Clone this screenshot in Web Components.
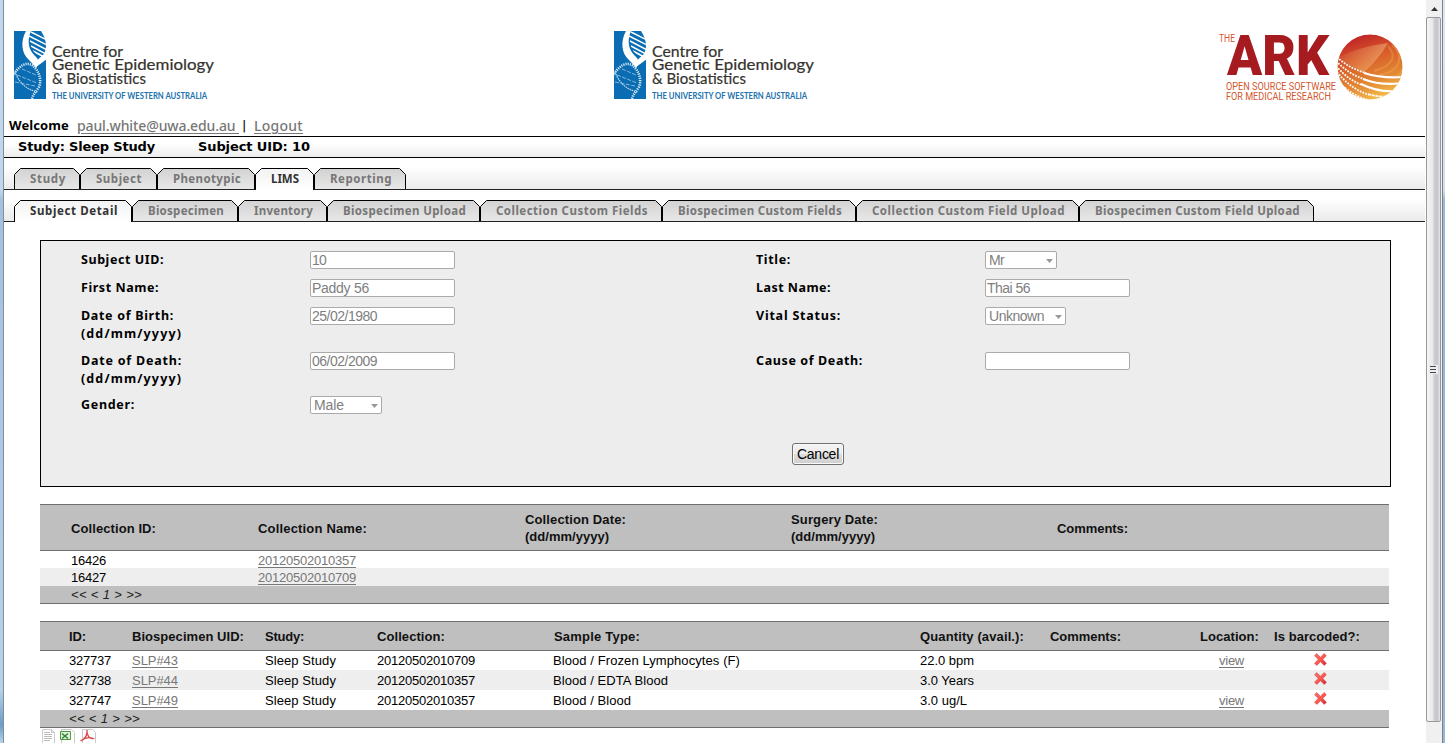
<!DOCTYPE html>
<html lang="en">
<head>
<meta charset="utf-8">
<title>The Ark - LIMS</title>
<style>
html,body{margin:0;height:743px;overflow:hidden;background:#fff}
body{font:13px/17px "Liberation Sans",Arial,sans-serif;color:#000}
</style>
</head>
<body>
<ark-app></ark-app>
<script>
const define = (name, html, setup) => customElements.define(name, class extends HTMLElement {
  connectedCallback() {
    if (this.shadowRoot) return;
    const root = this.attachShadow({mode: 'open'});
    root.innerHTML = typeof html === 'function' ? html(this) : html;
    if (setup) setup(this, root);
  }
});

/* One line of text whose tracking is adjusted so that it fills the width in "w". */
define('ark-text', `<style>
:host{display:inline-block;white-space:nowrap;vertical-align:top}
span{display:inline-block}
:host([link]) span{color:#777;text-decoration:underline;text-underline-offset:2px;text-decoration-thickness:1px}
</style><span><slot></slot></span>`, (host, root) => {
  const w = +host.getAttribute('w');
  if (!w) return;
  const span = root.querySelector('span');
  const n = host.textContent.length;
  span.style.letterSpacing = (w - span.getBoundingClientRect().width) / n + 'px';
  host.style.width = w + 'px';
});

define('uwa-logo', `<style>:host{display:block;width:210px;height:72px}svg{display:block;overflow:visible}</style>
<svg width="210" height="72" viewBox="0 0 210 72">
<defs><clipPath id="box"><path d="M0 1h32v68H0z"/></clipPath><clipPath id="helix"><path d="M15 1C14 12 17 20 23 25L33 32V1Z"/></clipPath></defs>
<g clip-path="url(#box)">
<path fill="#0a6cb2" d="M0 1h32v68H0z"/>
<path fill="#fff" d="M12 1C6 12 8 23 14 29C18 33 20 35 22 38C25 33 25 29 21 26C14 19 13 10 17 1Z"/>
<path fill="#fff" d="M27 1C33 10 33 18 30 24L20 33L22 37L33 29V1Z"/>
<g clip-path="url(#helix)" stroke="#fff" stroke-width="1.500"><path d="M17 2l16 8M15 6l18 9M16 11l17 9M17 16l15 8M19 21l11 6"/></g>
<g fill="none"><path stroke="#d9eaf5" stroke-width="2.600" stroke-dasharray="1.200 1" d="M0 44C6 35 12 32 18 35C25 40 28 50 25 57C22 62 19 64 18 69"/>
<path stroke-width="1.300" stroke="#b8d6eb" stroke-dasharray="1.500 .8" d="M1 42C5 53 13 60 24 62"/>
<path stroke-width="1" stroke="#86b8dc" stroke-dasharray="4 1.500" d="M8 39l14 6M3 45l20 8M1 52l20 4"/></g>
</g>
<g font-family="Lato,sans-serif" fill="#35332e" stroke="#35332e" stroke-width=".2" font-size="15">
<text x="38" y="26.500" textLength="71" lengthAdjust="spacingAndGlyphs">Centre for</text>
<text x="38" y="40.300" textLength="162" lengthAdjust="spacingAndGlyphs">Genetic Epidemiology</text>
<text x="38" y="54" textLength="94" lengthAdjust="spacingAndGlyphs">&amp; Biostatistics</text></g>
<text x="38" y="69" font-family="Lato,sans-serif" font-weight="700" font-size="8.500" fill="#2271ad" textLength="155" lengthAdjust="spacingAndGlyphs">THE UNIVERSITY OF WESTERN AUSTRALIA</text>
</svg>`);

define('ark-logo', `<style>:host{display:block;width:186px;height:72px}svg{display:block;overflow:visible}</style>
<svg width="186" height="72" viewBox="0 0 186 72">
<defs>
<linearGradient id="g" x1=".3" y1="0" x2=".65" y2="1"><stop offset="0" stop-color="#c01f27"/><stop offset=".4" stop-color="#d8602a"/><stop offset=".72" stop-color="#e38a35"/><stop offset="1" stop-color="#f6c04c"/></linearGradient>
<linearGradient id="s" x1="0" y1=".3" x2="1" y2=".5"><stop offset="0" stop-color="#f9b978" stop-opacity=".05"/><stop offset="1" stop-color="#f4bd85" stop-opacity=".55"/></linearGradient>
<clipPath id="c"><circle cx="151" cy="37" r="32.500"/></clipPath></defs>
<g font-family="Roboto,sans-serif" fill="#d3572c">
<text x="0" y="12" font-size="10" textLength="16" lengthAdjust="spacingAndGlyphs">THE</text>
<text x="8" y="45" font-size="56" font-weight="900" fill="#a61b20" textLength="102" lengthAdjust="spacingAndGlyphs">ARK</text>
<text x="7" y="59.500" font-size="10" textLength="110" lengthAdjust="spacingAndGlyphs">OPEN SOURCE SOFTWARE</text>
<text x="7" y="69.500" font-size="10" textLength="105" lengthAdjust="spacingAndGlyphs">FOR MEDICAL RESEARCH</text></g>
<g clip-path="url(#c)">
<circle cx="151" cy="37" r="33" fill="url(#g)"/>
<path fill="url(#s)" d="M118 28C133 20 153 15 169 13C161 27 153 35 144 43Z"/>
<g fill="none" stroke="#f6b25a" stroke-opacity=".35" stroke-width="2"><path d="M169 16C178 26 174 36 155 41M173 15C187 27 180 42 160 45M178 16C190 29 184 46 174 48"/></g>
<g fill="none" stroke="#fff">
<path stroke-width="1.800" stroke-dasharray="1.800 1.200" d="M118 27C126 35 136 40 147 43M117 31C126 40 135 46 145 49M117 36C126 46 133 51 143 55M118 42C127 53 136 60 150 65M118 49C124 58 136 67 153 71"/>
<path stroke-width="2.200" d="M145 43C158 47 171 48 184 47M144 49C157 54 170 55 183 53M142 54C154 60 166 62 178 61"/>
<path stroke-width="1.800" stroke-dasharray="3 .8" d="M149 64C158 67 166 67 172 66"/></g>
</g>
</svg>`);

/* Tab with chamfered corners. */
define('ark-tab', el => {
  const w = +el.getAttribute('width'), on = el.hasAttribute('active');
  return `<style>
:host{display:grid;width:${w}px;height:22px;font:bold 11.5px/22px "Noto Sans","Open Sans",sans-serif;color:${on ? '#333' : '#777'}}
svg,div{grid-area:1/1;display:block}div{padding-left:16px}
</style>
<svg width="${w}" height="22"><defs><linearGradient id="f" x1="0" y1="0" x2="0" y2="1"><stop offset="0" stop-color="${on ? '#f2f2f2' : '#d2d2d2'}"/><stop offset="1" stop-color="${on ? '#fff' : '#e9e9e9'}"/></linearGradient></defs>
<path d="M.5 22V6.500L6.500 .5H${w - 6.5}L${w - .5} 6.500V22" fill="url(#f)" stroke="#000"/>
${on ? '' : `<path d="M0 21.500H${w}" stroke="#222"/>`}</svg>
<div><ark-text w="${el.getAttribute('tw')}">${el.getAttribute('label')}</ark-text></div>`;
});

define('ark-tabs', `<style>
:host{display:block;background:linear-gradient(#222,#222) 0 100%/100% 1px no-repeat,linear-gradient(#fff 25%,#eaeaea)}
div{display:flex;padding-left:10px}
</style><div><slot></slot></div>`);

/* Disabled field: text box or select. */
define('ark-input', el => `<style>
:host{display:flex;box-sizing:border-box;width:${el.getAttribute('width') || 145}px;height:18px;border:1px solid #aaa;border-radius:2px;background:#fff;color:#808080;font:14px/18px "Liberation Sans",Arial,sans-serif;padding:0 4px 0 ${el.hasAttribute('select') ? 3 : 1}px;justify-content:space-between;align-items:center}
svg{margin-top:2px;margin-right:-1px}
</style>${el.getAttribute('value') ? `<ark-text w="${el.getAttribute('tw')}">${el.getAttribute('value')}</ark-text>` : ''}
${el.hasAttribute('select') ? '<svg width="7" height="4"><path d="M0 0h7L3.500 4z" fill="#999"/></svg>' : ''}`);

define('ark-form', `<style>
:host{display:block;box-sizing:border-box;width:1351px;height:247px;border:1px solid #000;background:#ededed;margin:18px 0 0 36px}
.grid{display:grid;grid-template-columns:229px 446px 229px 1fr;grid-template-rows:28px 28px 45px 44px 47px;padding:10px 0 0 40px}
.l{font:bold 12.5px/18px "Noto Sans","Open Sans",sans-serif;display:flex;flex-direction:column}
.foot{padding-left:751px}
button{display:block;width:52px;height:22px;padding:0;border:1px solid #707070;border-radius:3px;background:linear-gradient(#f4f4f4,#ebebeb 48%,#ddd 52%,#cfcfcf);font:14px/20px "Liberation Sans",Arial,sans-serif;color:#000;box-shadow:inset 0 0 0 1px #fafafa}
</style>
<div class="grid">
<div class="l"><ark-text w="83">Subject UID:</ark-text></div><ark-input value="10" tw="14"></ark-input>
<div class="l"><ark-text w="35">Title:</ark-text></div><ark-input select width="72" value="Mr" tw="15"></ark-input>
<div class="l"><ark-text w="78">First Name:</ark-text></div><ark-input value="Paddy 56" tw="57"></ark-input>
<div class="l"><ark-text w="75">Last Name:</ark-text></div><ark-input value="Thai 56" tw="43"></ark-input>
<div class="l"><ark-text w="93">Date of Birth:</ark-text><ark-text w="101">(dd/mm/yyyy)</ark-text></div><ark-input value="25/02/1980" tw="65"></ark-input>
<div class="l"><ark-text w="85">Vital Status:</ark-text></div><ark-input select width="81" value="Unknown" tw="55"></ark-input>
<div class="l"><ark-text w="101">Date of Death:</ark-text><ark-text w="101">(dd/mm/yyyy)</ark-text></div><ark-input value="06/02/2009" tw="65"></ark-input>
<div class="l"><ark-text w="107">Cause of Death:</ark-text></div><ark-input></ark-input>
<div class="l"><ark-text w="54">Gender:</ark-text></div><ark-input select width="72" value="Male" tw="30"></ark-input>
</div>
<div class="foot"><button><ark-text w="42">Cancel</ark-text></button></div>`);

/* Grid row; "cols" holds the column template. */
define('ark-row', el => `<style>
:host{display:grid;grid-template-columns:${el.getAttribute('cols')};align-items:center;box-sizing:border-box;height:${el.getAttribute('height')}px;padding-left:${el.getAttribute('pad')}px}
:host([alt]){background:#eee}
:host([head]){background:#bfbfbf;border:solid #6f6f6f;border-width:1px 0;font-weight:bold;color:#111}
:host([foot]){background:#bfbfbf;border-bottom:1px solid #6f6f6f;font-style:italic;color:#222}
</style><slot></slot>`);

define('red-cross', `<style>:host{display:block;padding-left:40px;margin-top:-3px}svg{display:block}</style>
<svg width="13" height="13"><defs><linearGradient id="r" x1="0" y1="0" x2="1" y2="1"><stop offset="0" stop-color="#ee7470"/><stop offset=".5" stop-color="#ff5a50"/><stop offset="1" stop-color="#c5232f"/></linearGradient></defs>
<path fill="url(#r)" stroke="#d7474b" stroke-width=".6" stroke-linejoin="round" d="M2.600.6L6.500 4.200L10.200.6L12.300 2.700L8.800 6.400L12.400 10.300L10.300 12.400L6.500 8.800L2.800 12.400L.6 10.200L4.200 6.400L.6 2.800Z"/></svg>`);

define('collection-table', () => {
  const at = 'pad="31" cols="187px 267px 266px 266px 1fr"';
  return `<style>:host{display:block;width:1349px;margin:17px 0 0 36px}ark-text{display:block}.d{padding-top:1px}</style>
<ark-row head height="47" ${at}>
<ark-text class="d" w="85">Collection ID:</ark-text><ark-text class="d" w="109">Collection Name:</ark-text>
<div><ark-text w="101">Collection Date:</ark-text><ark-text w="84">(dd/mm/yyyy)</ark-text></div>
<div><ark-text w="87">Surgery Date:</ark-text><ark-text w="84">(dd/mm/yyyy)</ark-text></div><ark-text class="d" w="71">Comments:</ark-text></ark-row>
<ark-row height="17" ${at}><ark-text class="d" w="35">16426</ark-text><ark-text class="d" link w="98">20120502010357</ark-text></ark-row>
<ark-row alt height="18" ${at}><ark-text w="35">16427</ark-text><ark-text link w="98">20120502010709</ark-text></ark-row>
<ark-row foot height="18" ${at}><ark-text w="71">&lt;&lt; &lt; 1 &gt; &gt;&gt;</ark-text></ark-row>`;
});

define('biospecimen-table', () => {
  const at = 'pad="29" cols="63px 133px 112px 176px 367px 130px 150px 74px 1fr"';
  const row = (alt, h, id, uid, col, type, tw, q, qw, view) => `<ark-row ${alt} height="${h}" ${at}>
<ark-text w="42">${id}</ark-text><ark-text link w="46">${uid}</ark-text><ark-text w="71">Sleep Study</ark-text><ark-text w="98">${col}</ark-text>
<ark-text w="${tw}">${type}</ark-text><ark-text w="${qw}">${q}</ark-text><span></span><div class="v">${view ? '<ark-text link w="25">view</ark-text>' : ''}</div><red-cross></red-cross></ark-row>`;
  return `<style>:host{display:block;width:1349px;margin:17px 0 0 36px}ark-text{display:block}.v{padding-left:19px}</style>
<ark-row head height="30" ${at}>
<ark-text w="17">ID:</ark-text><ark-text w="112">Biospecimen UID:</ark-text><ark-text w="39">Study:</ark-text><ark-text w="68">Collection:</ark-text><ark-text w="86" style="margin-left:1px">Sample Type:</ark-text>
<ark-text w="104">Quantity (avail.):</ark-text><ark-text w="71">Comments:</ark-text><ark-text w="59">Location:</ark-text><ark-text w="86">Is barcoded?:</ark-text></ark-row>
${row('', 19, '327737', 'SLP#43', '20120502010709', 'Blood / Frozen Lymphocytes (F)', 187, '22.0 bpm', 54, 1)}
${row('alt', 20, '327738', 'SLP#44', '20120502010357', 'Blood / EDTA Blood', 115, '3.0 Years', 54, 0)}
${row('', 20, '327747', 'SLP#49', '20120502010357', 'Blood / Blood', 78, '3.0 ug/L', 47, 1)}
<ark-row foot height="18" ${at}><ark-text w="71">&lt;&lt; &lt; 1 &gt; &gt;&gt;</ark-text></ark-row>`;
});

define('export-icons', `<style>:host{display:flex;gap:4px;padding-left:37px;height:15px;overflow:hidden}svg{display:block}</style>
<svg width="15" height="16"><path d="M1.500 1.500h9l3 3v12h-12z" fill="#fff" stroke="#ccc"/><path d="M10.500 1.500v3h3" fill="none" stroke="#c4c4c4"/><path d="M3 4.500h6M3 6.500h8M3 8.500h8M3 10.500h8M3 12.500h6" stroke="#bbb"/></svg>
<svg width="16" height="16"><path d="M1.500 1.500h10l3 3v12h-13z" fill="#fff" stroke="#c9c9c9"/><path d="M.5 3.500h10v8H.5z" fill="#e5f2df" stroke="#4c9a3e"/><path d="M2 5.500l6 5M8 5.500l-6 5" stroke="#2f8631" stroke-width="1.600"/></svg>
<svg width="17" height="16"><path d="M2.500 1.500h10l3 3v12h-13z" fill="#fff" stroke="#c9c9c9"/><path d="M.5 13C5 11 7.500 7 7 2C6.500 7 9.500 11 13 10.500C9 8.500 4 10.500 .5 13" fill="none" stroke="#d9484a" stroke-width="1.300"/></svg>`);

define('window-scrollbar', `<style>
:host{display:flex;flex-direction:column;width:16px;height:743px;background:#f0f0f0}
.up{height:17px;display:grid;place-items:center}
.thumb{box-sizing:border-box;height:705px;border:1px solid #999;border-radius:2px;background:linear-gradient(90deg,#f5f5f5,#e8e8ea 45%,#cfcdd3 55%,#c8c6cd 80%,#e6e6ea);width:15px;display:grid;place-items:center}
svg{display:block}</style>
<div class="up"><svg width="7" height="4"><path d="M0 4L3.500 0L7 4z" fill="#333"/></svg></div>
<div class="thumb"><svg width="9" height="9"><path d="M0 0h9v9H0z" fill="#eee"/><path d="M1 1.500h6M1 4.500h6M1 7.500h6" stroke="#444"/></svg></div>`);

define('ark-app', `<style>
:host{display:grid;grid-template-columns:4px 1421px 17px 3px;height:743px;overflow:hidden}
.left{border-right:1px solid #7e8fa3;background:linear-gradient(#c4d7ea 0,#c2d6ea 190px,#a5c0dc 200px,#b9d1e8 690px,#6d9cc4 725px,#b7d4ec 743px)}
.right{border-left:1px solid #70849a;background:linear-gradient(#dfe6ee 0,#d6dfe9 190px,#9fb7d0 200px,#9db6cf)}
window-scrollbar{margin-left:1px}
main{display:flex;flex-direction:column}
.logos{display:grid;grid-template-columns:600px 605px 1fr;padding:30px 0 0 10px;height:86px}
.who{display:flex;height:20px;padding-left:5px;font:13px/19px "DejaVu Sans",sans-serif}
.study{display:flex;gap:43px;height:20px;border:solid #000;border-width:1px 0;padding-left:14px;background:linear-gradient(#fff 30%,#ededed);font:bold 13px/19px "DejaVu Sans",sans-serif}
.t1,.t2{padding-top:10px}
.n{font-family:"Noto Sans","Open Sans",sans-serif;font-size:14px;font-weight:500}
</style>
<div class="left"></div>
<main>
<div class="logos"><uwa-logo></uwa-logo><uwa-logo></uwa-logo><ark-logo></ark-logo></div>
<div class="who"><ark-text w="60" style="font:bold 13px/19px 'Noto Sans','Open Sans',sans-serif;margin-right:8px">Welcome</ark-text><ark-text class="n" link w="162" style="margin-right:3px">paul.white@uwa.edu.au&nbsp;</ark-text><ark-text w="6" style="margin-right:6px;color:#000">|</ark-text><ark-text class="n" link w="49">Logout</ark-text></div>
<div class="study"><ark-text w="137">Study: Sleep Study</ark-text><ark-text w="112">Subject UID: 10</ark-text></div>
<ark-tabs class="t1">
<ark-tab width="66" tw="36" label="Study"></ark-tab><ark-tab width="77" tw="46" label="Subject"></ark-tab><ark-tab width="98" tw="68" label="Phenotypic"></ark-tab><ark-tab active width="59" tw="28" label="LIMS"></ark-tab><ark-tab width="92" tw="62" label="Reporting"></ark-tab>
</ark-tabs>
<ark-tabs class="t2">
<ark-tab active width="118" tw="88" label="Subject Detail"></ark-tab><ark-tab width="106" tw="76" label="Biospecimen"></ark-tab><ark-tab width="89" tw="59" label="Inventory"></ark-tab><ark-tab width="153" tw="123" label="Biospecimen Upload"></ark-tab><ark-tab width="182" tw="152" label="Collection Custom Fields"></ark-tab><ark-tab width="194" tw="164" label="Biospecimen Custom Fields"></ark-tab><ark-tab width="223" tw="193" label="Collection Custom Field Upload"></ark-tab><ark-tab width="235" tw="205" label="Biospecimen Custom Field Upload"></ark-tab>
</ark-tabs>
<ark-form></ark-form>
<collection-table></collection-table>
<biospecimen-table></biospecimen-table>
<export-icons></export-icons>
</main>
<window-scrollbar></window-scrollbar>
<div class="right"></div>`);
</script>
</body>
</html>
